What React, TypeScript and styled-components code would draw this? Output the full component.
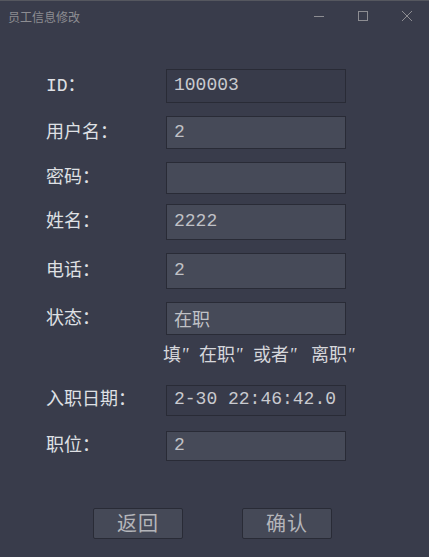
import React from 'react';
import styled, { createGlobalStyle } from 'styled-components';

const GlobalStyle = createGlobalStyle`
	html, body {
		margin: 0;
		padding: 0;
		background: #393c4b;
	}
	* {
		box-sizing: border-box;
	}
`;

const Window = styled.div`
	width: 429px;
	height: 557px;
	background: #393c4b;
	border-top: 1px solid #55575f;
	display: flex;
	flex-direction: column;
	font-family: "Liberation Mono", "Noto Sans CJK SC", monospace;
	overflow: hidden;
`;

const TitleBar = styled.div`
	height: 32px;
	display: flex;
	align-items: center;
	padding-left: 8px;
`;

const Title = styled.span`
	flex: 1;
	font-family: "Noto Sans CJK SC", sans-serif;
	font-size: 12px;
	color: #8d8d92;
	margin-top: -2px;
`;

const Controls = styled.div`
	display: flex;
	align-items: center;
	height: 100%;
`;

const ControlButton = styled.div`
	width: 44px;
	height: 100%;
	display: flex;
	align-items: center;
	justify-content: center;
	margin-top: -2px;
`;

const Form = styled.div`
	display: flex;
	flex-direction: column;
	padding-left: 46px;
	padding-top: 36px;
`;

const Row = styled.div<{ $gap: number }>`
	display: grid;
	grid-template-columns: 120px 180px;
	align-items: center;
	margin-top: ${(p) => p.$gap}px;
`;

const Label = styled.span`
	font-size: 18px;
	color: #dfe0e4;
	padding-bottom: 6px;
	white-space: nowrap;
`;

const Field = styled.div<{ $h: number; $disabled?: boolean }>`
	height: ${(p) => p.$h}px;
	background: ${(p) => (p.$disabled ? '#383b4a' : '#464a58')};
	border: 1px solid #292b36;
	display: flex;
	align-items: center;
	padding-left: 7px;
	font-size: 18px;
	color: ${(p) => (p.$disabled ? '#c9cacf' : '#c0c1c6')};
	white-space: nowrap;
	overflow: hidden;
	padding-bottom: 2px;
`;

const Hint = styled.div`
	margin-top: 6px;
	margin-left: 117px;
	height: 25px;
	font-size: 18px;
	color: #d6d7db;
	white-space: nowrap;
	font-family: "Noto Sans CJK SC", sans-serif;
	line-height: 25px;
`;

const Quote = styled.span`
	display: inline-block;
	width: 18px;
	font-family: "Liberation Serif", serif;
	font-style: italic;
`;

const Buttons = styled.div`
	display: flex;
	gap: 59px;
	margin-top: 46px;
	padding-left: 47px;
`;

const Button = styled.button`
	width: 90px;
	height: 31px;
	background: #454957;
	border: 1px solid #292b36;
	border-radius: 2px;
	color: #b4b5ba;
	font-size: 20px;
	font-family: "Noto Sans CJK SC", sans-serif;
	display: flex;
	align-items: center;
	justify-content: center;
	padding: 0 0 2px 0;
	letter-spacing: 1px;
`;

type FieldRow = {
	label: string;
	value: string;
	gap: number;
	height: number;
	disabled?: boolean;
};

const topRows: FieldRow[] = [
	{ label: 'ID：', value: '100003', gap: 0, height: 34, disabled: true },
	{ label: '用户名：', value: '2', gap: 13, height: 33 },
	{ label: '密码：', value: '', gap: 13, height: 32 },
	{ label: '姓名：', value: '2222', gap: 10, height: 36 },
	{ label: '电话：', value: '2', gap: 13, height: 36 },
	{ label: '状态：', value: '在职', gap: 13, height: 33 },
];

const bottomRows: FieldRow[] = [
	{ label: '入职日期：', value: '2-30 22:46:42.0', gap: 18, height: 31, disabled: true },
	{ label: '职位：', value: '2', gap: 14, height: 30 },
];

const renderRow = (r: FieldRow) => (
	<Row key={r.label} $gap={r.gap}>
		<Label>{r.label}</Label>
		<Field $h={r.height} $disabled={r.disabled}>
			{r.value}
		</Field>
	</Row>
);

const App: React.FC = () => {
	return (
		<Window>
			<GlobalStyle />
			<TitleBar>
				<Title>员工信息修改</Title>
				<Controls>
					<ControlButton>
						<svg width="12" height="12" viewBox="0 0 12 12">
							<line x1="1" y1="6.5" x2="11" y2="6.5" stroke="#8d8d92" strokeWidth="1" />
						</svg>
					</ControlButton>
					<ControlButton>
						<svg width="12" height="12" viewBox="0 0 12 12">
							<rect x="1.5" y="1.5" width="9" height="9" fill="none" stroke="#8d8d92" strokeWidth="1" />
						</svg>
					</ControlButton>
					<ControlButton>
						<svg width="12" height="12" viewBox="0 0 12 12">
							<path d="M1 1 L11 11 M11 1 L1 11" stroke="#8d8d92" strokeWidth="1" />
						</svg>
					</ControlButton>
				</Controls>
			</TitleBar>
			<Form>
				{topRows.map(renderRow)}
				<Hint>
					填<Quote>"</Quote>在职<Quote>"</Quote>或者<Quote>"</Quote> 离职<Quote>"</Quote>
				</Hint>
				{bottomRows.map(renderRow)}
				<Buttons>
					<Button>返回</Button>
					<Button>确认</Button>
				</Buttons>
			</Form>
		</Window>
	);
};

export default App;
